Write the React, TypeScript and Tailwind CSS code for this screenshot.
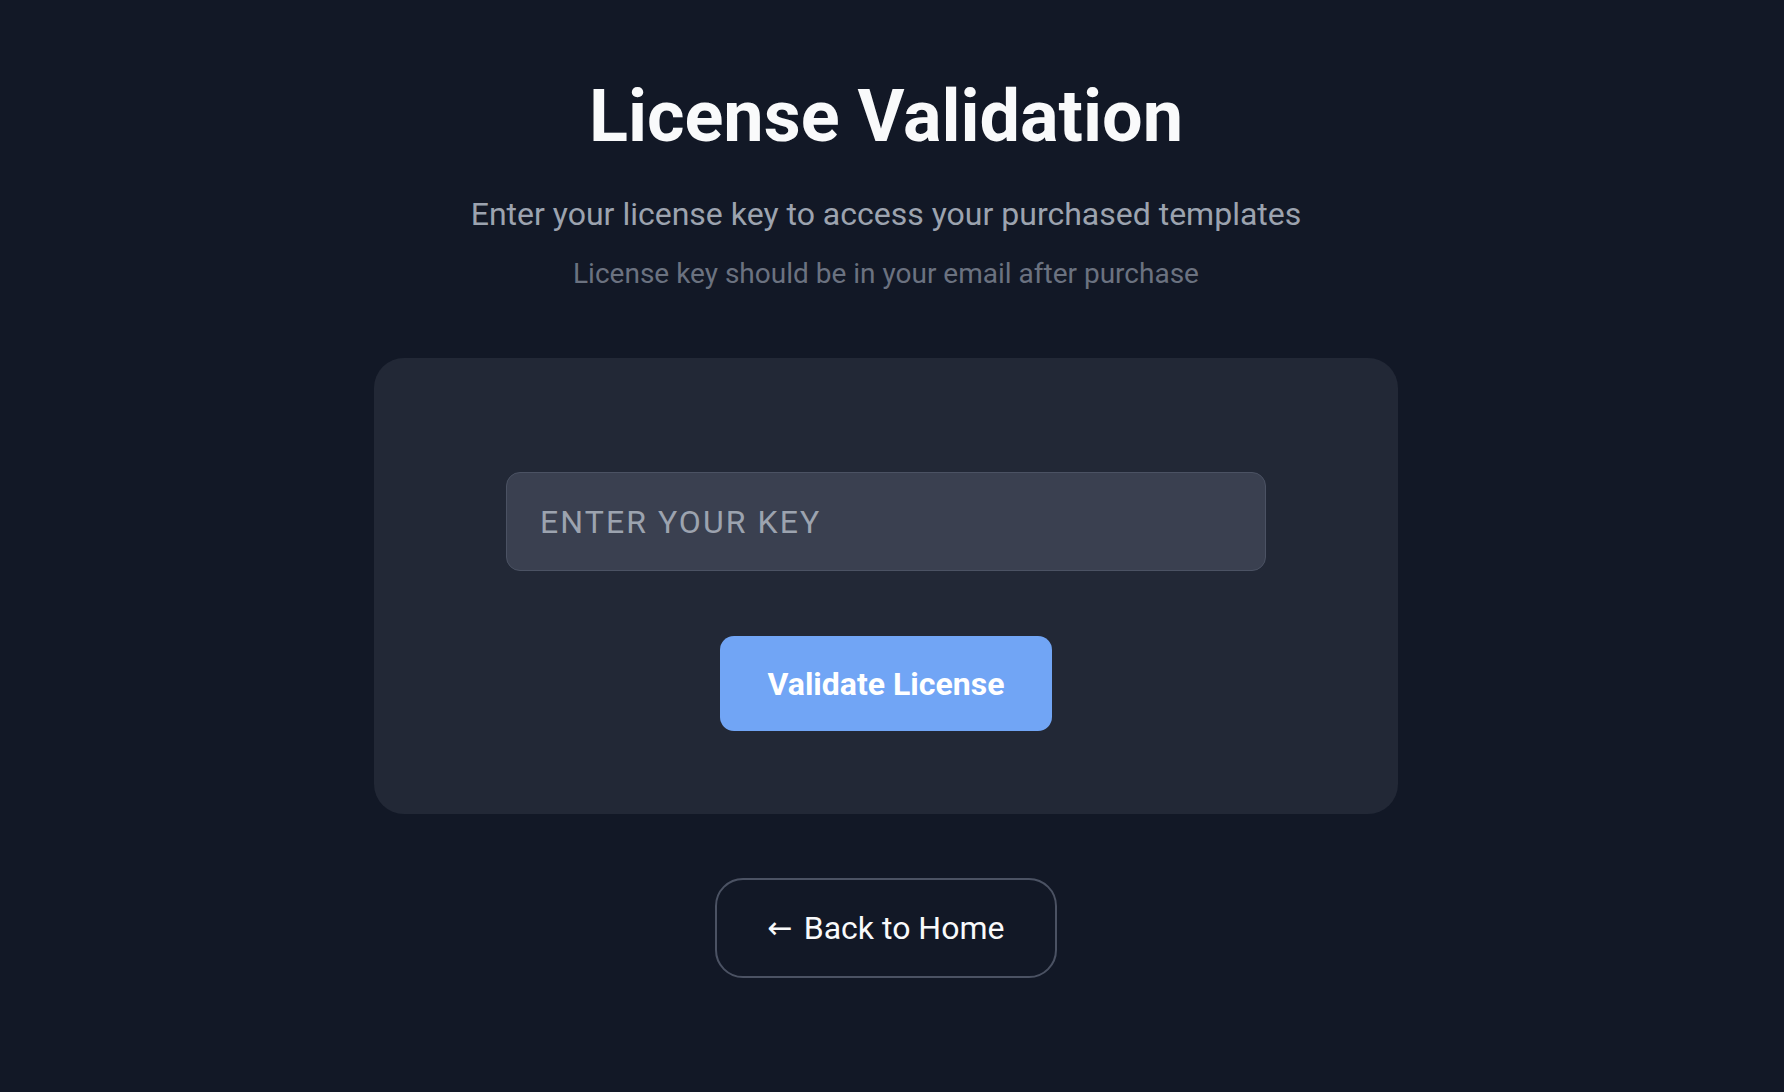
import { useState } from "react";

export default function App() {
  const [licenseKey, setLicenseKey] = useState("");

  return (
    <div className="min-h-screen bg-[#121826] pr-3 font-['Roboto','Liberation_Sans',sans-serif]">
      <main className="flex flex-col items-center pt-[81px] pb-20">
        {/* Header */}
        <h1 className="text-[72px] leading-[72px] font-bold text-[#f9fafb]">
          License Validation
        </h1>
        <p className="mt-[41px] text-[32px] leading-[40px] text-[#9ca3af]">
          Enter your license key to access your purchased templates
        </p>
        <p className="mt-[22px] text-[28px] leading-[36px] text-[#6b7280]">
          License key should be in your email after purchase
        </p>

        {/* Card */}
        <div className="mt-[66px] flex w-[1024px] flex-col items-center rounded-[30px] bg-[#222836] px-[132px] pt-[114px] pb-[83px]">
          <input
            value={licenseKey}
            onChange={(e) => setLicenseKey(e.target.value)}
            placeholder="ENTER YOUR KEY"
            className="h-[99px] w-full rounded-[14px] border border-[#4b5263] bg-[#3a4050] px-[33px] text-[32px] uppercase tracking-[0.065em] text-white outline-none placeholder:text-[#9ca3af]"
          />
          <button className="mt-[65px] h-[95px] rounded-[14px] bg-[#71a5f5] px-12 text-[32px] font-bold text-white">
            Validate License
          </button>
        </div>

        {/* Back link */}
        <button className="mt-[64px] flex h-[100px] items-center rounded-[28px] border-2 border-[#4b5263] px-[51px] text-[32px] text-[#f9fafb]">
          <span className="font-['DejaVu_Sans',sans-serif] text-[30px] leading-none">←</span>
          <span className="ml-[11px]">Back to Home</span>
        </button>
      </main>
    </div>
  );
}
